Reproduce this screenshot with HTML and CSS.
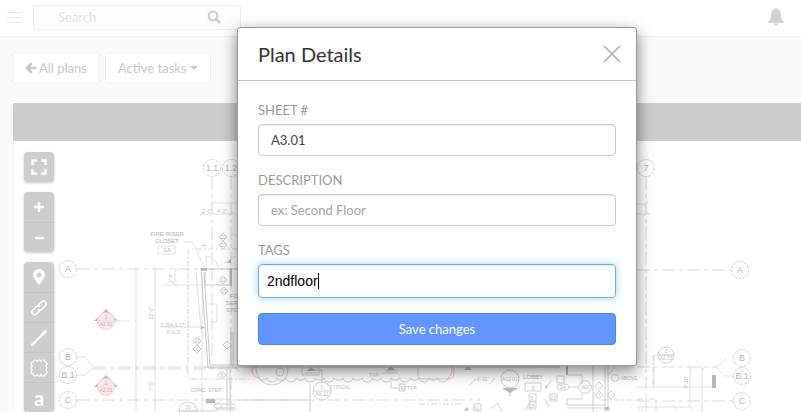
FILE: index.html
```html
<!DOCTYPE html>
<html lang="en">

<head>
    <meta charset="UTF-8">
    <meta name="viewport" content="width=device-width, initial-scale=1.0">
    <title>Plan Details</title>
    <link rel="stylesheet" href="styles.css">
</head>

<body>

    <header class="topbar">
        <button class="menu-button" aria-label="Menu"><span></span><span></span><span></span></button>
        <form class="search">
            <input type="search" placeholder="Search" aria-label="Search">
            <button type="button" aria-label="Submit search">
                <svg width="14" height="14" viewBox="0 0 14 14"><circle cx="6" cy="6" r="4.4" fill="none" stroke="currentColor" stroke-width="2"/><path d="M9 9l3.4 3.4" stroke="currentColor" stroke-width="2.4" stroke-linecap="round"/></svg>
            </button>
        </form>
        <button class="bell" aria-label="Notifications">
            <svg width="16" height="18" viewBox="0 0 16 18"><path fill="currentColor" d="M8 0c.8 0 1.200.5 1.200 1.200C11.800 1.800 13 3.800 13 6.500c0 4 .8 5.500 2.900 7.300v1H.1v-1C2.200 12 3 10.500 3 6.500c0-2.700 1.200-4.700 3.800-5.300C6.800.5 7.200 0 8 0zM5.700 15.500h4.600C10 16.800 9.200 17.500 8 17.500s-2-.7-2.300-2z"/></svg>
        </button>
    </header>

    <nav class="actions">
        <a class="action" href="#">
            <svg width="12" height="12" viewBox="0 0 12 12"><path d="M6.800 1.200L2 6l4.800 4.800M2.200 6H11.500" fill="none" stroke="currentColor" stroke-width="2.600"/></svg>
            All plans
        </a>
        <button class="action">Active tasks <span class="arrow-down"></span></button>
    </nav>

    <main class="plan">
        <div class="plan-bar"></div>
        <div class="sheet">
            <svg class="drawing" viewBox="14 141 787 271">
                <!-- grid lines -->
                <g class="grid-line">
                    <path d="M77 269H238M93 367H238M93 369H238M77 400H480M637 270H732M637 367H716M637 401H733"/>
                    <path d="M212 177V268M231 177V412M212 268V360M646 177V412"/>
                </g>
                <g class="thin">
                    <path d="M77 357H85L93 367M77 375H85L93 368M726 359L716 367L725 376H734"/>
                    <path d="M136 269V412M155 269V412M175 269V285M212 203H238M200 214H238M231 235H238M637 204H646M637 214H650"/>
                    <path d="M134 267l4 4M153 267l4 4M173 267l4 4M173 283l4 4M153 366l4 4M153 398l4 4M210 205l4-4M200 216l4-4M210 216l4-4M229 216l4-4M229 237l4-4M644 206l4-4M644 216l4-4M688 365l4 4M700 365l4 4M673 405l4 4M688 405l4 4"/>
                    <path d="M183 242H193L204 267M158 246h17v8h-17zM160 327H204M164 285H201M206 256v12M206 256a12 12 0 0 1 12 12M224 263l12-7"/>
                    <path d="M702 367V412M690 367V405M637 387H713M654 355V388M654 355H674M637 407H692M639 408V412M642 408V412"/>
                    <path d="M202 275V412M196 271L201 330M208 304h9v18h-7M206 399h25v5h-25zM216 404h18v8M216 410h20"/>
                </g>
                <path class="dash" d="M238 249H192q-4 0-4 4V375q0 4 4 4H250M637 399H652q4 0 4 4v9M653 355v33"/>
                <!-- walls -->
                <g class="wall">
                    <path d="M200 269H238M201 269L208 368H238M204 272L210 365H238M205 272V285H230V269M227 369V410M230 369V410M231 332V366M233 332V366"/>
                    <path d="M204 367H560M238 365H560M215 408h19"/>
                </g>
                <path class="solid" d="M201 268h6v3h-6zM230 268h2v18h-2zM206 399h9v4h-9zM712 375h4v13h-4zM202 245h3v1h-3zM201 326l4 1.500-4 1.500z"/>
                <!-- grid bubbles -->
                <g class="bubble">
                    <circle cx="212" cy="168" r="8.500"/><circle cx="231" cy="168" r="8.500"/><circle cx="646" cy="168" r="8.500"/>
                    <circle cx="68" cy="269" r="8.500"/><circle cx="68" cy="357" r="8.500"/><circle cx="68" cy="375" r="8.500"/><circle cx="68" cy="400" r="8.500"/>
                    <circle cx="740" cy="270" r="8.500"/><circle cx="742" cy="358" r="8.500"/><circle cx="742" cy="376" r="8.500"/><circle cx="742" cy="401" r="8.500"/>
                </g>
                <g class="bubble-text">
                    <text x="212" y="171">1.1</text><text x="231" y="171">1.2</text><text x="646" y="171">7</text>
                    <text x="68" y="272">A</text><text x="68" y="360">B</text><text x="68" y="378">B.1</text><text x="68" y="403">C</text>
                    <text x="740" y="273">A</text><text x="742" y="361">B</text><text x="742" y="379">B.1</text><text x="742" y="404">C</text>
                </g>
                <!-- section markers -->
                <g class="marker">
                    <path d="M94 321L106 309L118 321z"/><circle cx="106" cy="321" r="8.500"/><path class="marker-line" d="M97 321h33"/>
                    <path d="M94 387L106 375L118 387z"/><circle cx="106" cy="387" r="8.500"/><path class="marker-line" d="M97 387h18"/>
                </g>
                <g class="marker-text">
                    <text x="106" y="319">1</text><text x="106" y="326">A2.01</text>
                    <text x="106" y="385">2</text><text x="106" y="392">A2.01</text>
                </g>
                <!-- callouts -->
                <g class="thin callout">
                    <circle cx="322" cy="391" r="9"/><path d="M313 391h18M322 382V370H310"/>
                    <circle cx="666" cy="355" r="8"/><path d="M658 355h16"/>
                    <path d="M179 411a9 9 0 0 1 18 0zM177 411H217"/>
                    <circle cx="272" cy="369" r="16"/><circle cx="280" cy="372" r="4"/>
                    <path d="M302 366v9h17v-9M305 373h12M382 373h16M385 371h12M418 366v8q0 5 5 5h25q6 0 6-6v-7"/>
                    <path d="M218 375l4-4 4 4-4 4zM214 406l4-4 4 4-4 4zM219 237l4-4 4 4-4 4zM219 245l4-4 4 4-4 4zM219 280l4-4 4 4-4 4zM220 291l4-4 4 4-4 4zM193 341l4-4 4 4-4 4zM193 349l4-4 4 4-4 4zM223 345l4-4 4 4-4 4z"/>
                    <circle cx="510" cy="379" r="9"/><path d="M469 385l7-6M490 384l5-6M525 391v-8h16v8zM529 394h7v7h-7zM529 402h7v7h-7zM550 394h7v7h-7zM557 376h7v7h-7zM399 384h6v7h-6zM391 381v7h7M474 404h7v7h-7z"/>
                    <path d="M567 375V365M567 375H582V384M567 405V399H582V393M578 387l4-6h6l4 6-4 6h-6zM557 387q0-3 4-3h4q4 0 4 3t-4 3h-4q-4 0-4-3zM569 387h9M593 412V366M605 366V412M608 366V412M615 366l-7 10M567 405H606M567 408H606M545 399l4 8M551 380l-6 9M490 409l8-6 4 9M525 410l5-7"/>
                    <path d="M595 386l4-4 4 4-4 4zM595 395l4-4 4 4-4 4zM607 395l4-4 4 4-4 4z"/><circle cx="615" cy="378" r="3.500"/>
                    <path d="M238 400H306M310 385V412"/>
                </g>
                <path class="dash" d="M419 404H463M602 400H640"/>
                <path class="solid" d="M502 388h16l-8 5zM307 371l4-4 4 4zM387 370l4-4 4 4zM464 370l4-4 4 4zM227 263l4-4v4zM545 389l1-4 2 2zM464 411l3-4 2 3zM566 366h2v9h-2zM605 407h4v3h-4z"/>
                <path class="cloud" d="M256 365q-6 4-3 9q2 4 5 4a5 4 0 0 0 9 0a5 4 0 0 0 10 0a5 4 0 0 0 9 0a5 4 0 0 0 10 0a5 4 0 0 0 9 0a5 4 0 0 0 10 0a5 4 0 0 0 9 0a5 4 0 0 0 10 0a5 4 0 0 0 9 0a5 4 0 0 0 10 0a5 4 0 0 0 9 0a5 4 0 0 0 10 0a5 4 0 0 0 9 0a5 4 0 0 0 10 0a5 4 0 0 0 9 0a5 4 0 0 0 10 0a5 4 0 0 0 9 0a5 4 0 0 0 10 0a5 4 0 0 0 9 0a5 4 0 0 0 10 0q6-5 3-12"/>
                <!-- room names and notes -->
                <g class="room">
                    <text x="167" y="236">FIRE RISER</text><text x="167" y="243">CLOSET</text><text x="167" y="252">1A</text>
                    <text x="234" y="298">FO</text><text x="232" y="305">SER</text><text x="232" y="312">STO</text>
                    <text x="533" y="379">LOBBY</text><text x="533" y="390">3</text>
                </g>
                <g class="note">
                    <text x="207" y="213">2'-0"</text><text x="222" y="213">4'-2"</text>
                    <text x="173" y="327">0.204-9.17'</text><text x="173" y="334">H.G.S</text>
                    <text transform="translate(153 313) rotate(-90)">22'-0"</text>
                    <text transform="translate(153 386) rotate(-90)">7'-5"</text>
                    <text transform="translate(173 278) rotate(-90)">2'-9"</text>
                    <text transform="translate(688 382) rotate(-90)">4'-10"</text>
                    <text x="188" y="409">20</text><text x="206" y="392">CONC. STEP</text>
                    <text x="322" y="389">1</text><text x="322" y="396">A0.12</text><text x="340" y="389">TYPICAL</text>
                    <text x="374" y="377">TYP.</text><text x="408" y="390">(E) TYP.</text><text x="483" y="381">4'-11"</text>
                    <text x="510" y="381">A12.01</text><text x="510" y="396">6</text><text x="629" y="380">ABOVE</text>
                    <text x="666" y="353">2</text><text x="666" y="360">A0.03</text>
                    <text x="532" y="400">5</text><text x="532" y="408">15</text><text x="553" y="400">22</text><text x="477" y="410">11</text>
                    <text x="222" y="377">6</text><text x="223" y="282">12</text><text x="224" y="293">15</text><text x="585" y="389">W2</text><text x="563" y="389">2A</text>
                    <text x="223" y="239">22</text><text x="223" y="247">27</text><text x="197" y="343">22</text><text x="197" y="351">6</text>
                </g>
            </svg>

            <div class="tools">
                <div class="tool-group">
                    <button aria-label="Full screen"><svg width="16" height="16" viewBox="0 0 16 16"><path d="M1.500 6V1.500h4.500M10 1.500h4.500v4.500M14.500 10v4.500h-4.500M6 14.500H1.500v-4.500" fill="none" stroke="currentColor" stroke-width="2.400"/></svg></button>
                </div>
                <div class="tool-group">
                    <button aria-label="Zoom in"><svg width="12" height="12" viewBox="0 0 12 12"><path d="M6 1v10M1 6h10" stroke="currentColor" stroke-width="2.400"/></svg></button>
                    <button aria-label="Zoom out"><svg width="12" height="12" viewBox="0 0 12 12"><path d="M2 6h9" stroke="currentColor" stroke-width="2.400"/></svg></button>
                </div>
                <div class="tool-group">
                    <button aria-label="Pin"><svg width="12" height="16" viewBox="0 0 12 16"><path fill="currentColor" fill-rule="evenodd" d="M6 0a6 6 0 0 1 6 6c0 3-3.500 6.500-6 10C3.500 12.500 0 9 0 6a6 6 0 0 1 6-6zm0 3.500a2.500 2.500 0 1 0 0 5 2.500 2.500 0 0 0 0-5z"/></svg></button>
                    <button aria-label="Link"><svg width="18" height="18" viewBox="0 0 18 18"><g transform="rotate(-45 9 9)" fill="none" stroke="currentColor" stroke-width="1.500"><path d="M7.500 11.500H3a2.700 2.700 0 0 1 0-5.400H8a2.700 2.700 0 0 1 2.700 2.700"/><path d="M10.500 6.500H15a2.700 2.700 0 0 1 0 5.400H10a2.700 2.700 0 0 1-2.700-2.700"/></g></svg></button>
                    <button aria-label="Line"><svg width="16" height="16" viewBox="0 0 16 16"><path d="M1.500 14.500L12 4" stroke="currentColor" stroke-width="2"/><path d="M11.500 4.500l3-3M1 15l2.500-2.500" stroke="currentColor" stroke-width="2.600" stroke-linecap="round"/></svg></button>
                    <button aria-label="Cloud"><svg width="18" height="18" viewBox="0 0 18 18"><path d="M3 3a2 2 0 0 1 4 0a2 2 0 0 1 4 0a2 2 0 0 1 4 0a2 2 0 0 1 0 4a2 2 0 0 1 0 4a2 2 0 0 1 0 4a2 2 0 0 1-4 0a2 2 0 0 1-4 0a2 2 0 0 1-4 0a2 2 0 0 1 0-4a2 2 0 0 1 0-4a2 2 0 0 1 0-4z" fill="none" stroke="currentColor" stroke-width="1.200"/></svg></button>
                    <button class="tool-text">a</button>
                </div>
            </div>
        </div>
    </main>

    <!-- Plan details popup -->
    <div class="modal" role="dialog" aria-labelledby="modalTitle">
        <div class="modal-header">
            <h2 id="modalTitle">Plan Details</h2>
            <button class="close" aria-label="Close">
                <svg width="18" height="18" viewBox="0 0 18 18"><path d="M1 1l16 16M17 1L1 17" stroke="currentColor" stroke-width="1.500"/></svg>
            </button>
        </div>
        <form class="modal-body">
            <label for="sheet">SHEET #</label>
            <input class="field" id="sheet" type="text" value="A3.01">
            <label for="description">DESCRIPTION</label>
            <input class="field" id="description" type="text" placeholder="ex: Second Floor">
            <label for="tags">TAGS</label>
            <div class="tag-field">
                <input id="tags" type="text" value="2ndfloor">
                <span class="caret"></span>
            </div>
            <button class="save" type="button">Save changes</button>
        </form>
    </div>

</body>

</html>
```
FILE: styles.css
```css
* {
    box-sizing: border-box;
}

body {
    margin: 0;
    height: 100vh;
    overflow: hidden;
    display: flex;
    flex-direction: column;
    background-color: #fafafa;
    font-family: Lato, sans-serif;
    font-size: 13px;
    line-height: 20px;
    color: #c8c8c8;
}

button,
input {
    font: inherit;
    color: inherit;
    margin: 0;
    padding: 0;
    border: none;
    background: none;
    outline: none;
}

svg {
    display: block;
}

/* Top bar */
.topbar {
    display: flex;
    align-items: center;
    height: 37px;
    flex-shrink: 0;
    padding: 0 17px 2px 7px;
    background-color: #fff;
    border-bottom: 1px solid #ececec;
}

.menu-button {
    display: flex;
    flex-direction: column;
    gap: 4px;
    width: 15px;
}

.menu-button span {
    height: 1px;
    background-color: #e6e6e6;
}

.search {
    display: flex;
    align-items: center;
    width: 208px;
    height: 25px;
    margin-left: 11px;
    padding: 0 19px 0 24px;
    border: 1px solid #ececec;
    border-radius: 3px;
    background-color: #fdfdfd;
}

.search input {
    flex: 1;
    min-width: 0;
    appearance: none;
}

.search input::placeholder {
    color: #e2e2e2;
}

.bell {
    margin-left: auto;
    color: #d2d2d2;
}

/* Buttons above the plan */
.actions {
    display: flex;
    gap: 5px;
    padding: 15px 12px 19px;
}

.action {
    display: flex;
    align-items: center;
    gap: 2px;
    height: 32px;
    padding: 0 12px;
    border: 1px solid #efefef;
    border-radius: 4px;
    background-color: #fff;
    color: #c8c8c8;
    text-decoration: none;
}

.arrow-down {
    margin-left: 1px;
    border: 4px solid transparent;
    border-top-color: #c8c8c8;
    border-bottom: none;
}

/* Plan */
.plan {
    flex: 1;
    min-height: 0;
    display: flex;
    flex-direction: column;
    margin-left: 13px;
    border-left: 1px solid #f3f3f3;
}

.plan-bar {
    height: 38px;
    flex-shrink: 0;
    margin-left: -1px;
    background-color: #cdcdcd;
    border-top-left-radius: 2px;
}

.sheet {
    position: relative;
    flex: 1;
    min-height: 0;
    overflow: hidden;
    background-color: #fff;
}

.drawing {
    width: 100%;
    font-family: "Liberation Sans", Arial, sans-serif;
    text-anchor: middle;
}

.grid-line,
.thin,
.dash,
.wall,
.bubble,
.cloud {
    fill: none;
    stroke: #dadada;
    stroke-width: 1;
}

.grid-line {
    stroke-dasharray: 13 4 4 4;
}

.thin {
    stroke: #e0e0e0;
}

.callout {
    stroke: #d0d0d0;
}

.dash {
    stroke: #d4d4d4;
    stroke-dasharray: 6 2 2 2;
}

.wall {
    stroke: #c8c8c8;
}

.bubble {
    fill: #fff;
    stroke: #d2d2d2;
    stroke-dasharray: 3 1;
}

.bubble-text {
    font-size: 9px;
    fill: #b4b4b4;
}

.solid {
    fill: #b8b8b8;
}

.marker {
    fill: #b8b8b8;
}

.marker circle {
    fill: #fde8e8;
    stroke: #f0d0d0;
}

.marker-line {
    stroke: #ecdede;
}

.marker-text {
    font-size: 5px;
    fill: #caa;
}

.cloud {
    stroke: #f3bcbc;
}

.room {
    font-size: 6px;
    fill: #b0b0b0;
}

.note {
    font-size: 5px;
    fill: #bdbdbd;
}

/* Tools over the plan */
.tools {
    position: absolute;
    top: 11px;
    left: 10px;
    display: flex;
    flex-direction: column;
    gap: 10px;
}

.tool-group {
    width: 30px;
    border-radius: 4px;
    background-color: #cdcdcd;
    box-shadow: 0 1px 3px rgba(0, 0, 0, 0.2);
}

.tool-group button {
    display: flex;
    align-items: center;
    justify-content: center;
    width: 30px;
    height: 30px;
    color: #fff;
}

.tool-group button + button {
    border-top: 1px solid #c4c4c4;
}

.tool-group .tool-text {
    font-size: 20px;
    font-weight: bold;
}

/* Popup */
.modal {
    position: absolute;
    top: 27px;
    left: 237px;
    width: 400px;
    border: 1px solid #999;
    border-radius: 3px;
    background-color: #fff;
    box-shadow: 0 5px 15px rgba(0, 0, 0, 0.5);
    color: #999;
}

.modal-header {
    display: flex;
    align-items: center;
    justify-content: space-between;
    height: 53px;
    padding: 0 15px 0 20px;
    border-bottom: 1px solid #c8c8c8;
}

.modal-header h2 {
    margin: 0;
    font-size: 20px;
    font-weight: normal;
    color: #333;
}

.close {
    color: #aaa;
}

.modal-body {
    display: flex;
    flex-direction: column;
    padding: 19px 20px 20px;
}

.modal-body label {
    margin-bottom: 4px;
}

.field {
    height: 32px;
    margin-bottom: 14px;
    padding: 0 12px;
    border: 1px solid #ccc;
    border-radius: 4px;
    box-shadow: inset 0 1px 1px rgba(0, 0, 0, 0.08);
    color: #444;
}

.field::placeholder {
    color: #a5a5a5;
}

.tag-field {
    display: flex;
    align-items: center;
    height: 34px;
    margin-bottom: 15px;
    padding: 0 8px;
    border: 1px solid #66afe9;
    border-radius: 4px;
    box-shadow: inset 0 1px 1px rgba(0, 0, 0, 0.08), 0 0 8px rgba(102, 175, 233, 0.6);
    font-family: "Liberation Sans", Arial, sans-serif;
    font-size: 14px;
    color: #000;
}

.tag-field input {
    field-sizing: content;
}

.caret {
    width: 1px;
    height: 16px;
    background-color: #000;
}

.save {
    height: 32px;
    border: 1px solid #4a84fb;
    border-radius: 4px;
    background-color: #6195ff;
    color: #fff;
}
```
